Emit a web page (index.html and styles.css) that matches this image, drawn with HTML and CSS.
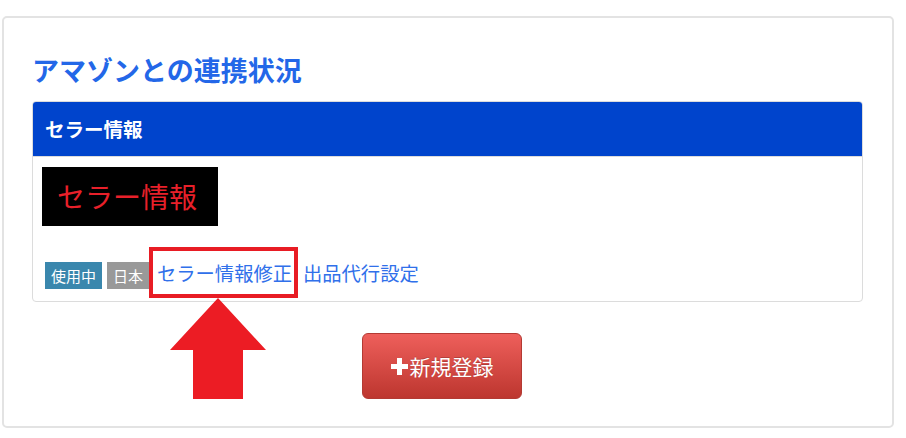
FILE: index.html
```html
<!DOCTYPE html>
<html lang="ja">
<head>
  <meta charset="UTF-8" />
  <meta name="viewport" content="width=device-width, initial-scale=1.0"/>
  <title>アマゾンとの連携状況</title>
  <link rel="stylesheet" href="styles.css">
</head>
<body>
  <div class="card">
    <h2 class="title">アマゾンとの連携状況</h2>

    <div class="panel">
      <div class="panel-head">セラー情報</div>
      <div class="panel-body">
        <div class="seller-logo">セラー情報</div>
        <div class="status-row">
          <span class="badge badge-info">使用中</span>
          <span class="badge badge-gray">日本</span>
          <span class="mark">
            <a href="#" class="link">セラー情報修正</a>
          </span>
          <a href="#" class="link link-next">出品代行設定</a>
        </div>
      </div>
    </div>

    <div class="actions">
      <button class="btn-new" type="button">
        <svg class="plus" width="17" height="17" viewBox="0 0 17 17">
          <path d="M6 0h5v6h6v5h-6v6H6v-6H0V6h6z" fill="#fff"/>
        </svg>新規登録
      </button>
    </div>

    <svg class="arrow" width="96" height="101" viewBox="0 0 96 101">
      <polygon points="48,0 96,52 73,52 73,101 23,101 23,52 0,52" fill="#ec1c24"/>
    </svg>
  </div>
</body>
</html>
```

FILE: styles.css
```css
body {
  margin: 0;
  background: #fff;
  font-family: "Noto Sans CJK JP", "Liberation Sans", sans-serif;
}
.card {
  position: relative;
  box-sizing: border-box;
  width: 892px;
  height: 412px;
  margin: 16px 0 0 2px;
  padding: 34px 29px 0 28px;
  border: 2px solid #e3e3e3;
  border-radius: 5px;
}
.title {
  margin: 0 0 13px 0;
  font-size: 27px;
  line-height: 36px;
  font-weight: bold;
  color: #2367e8;
}
.panel {
  border: 1px solid #dcdcdc;
  border-radius: 4px;
}
.panel-head {
  height: 54px;
  line-height: 54px;
  padding-left: 12px;
  background: #0044cc;
  color: #fff;
  font-size: 19.5px;
  font-weight: bold;
  border-radius: 3px 3px 0 0;
  border-bottom: 1px solid #dcdcdc;
}
.panel-body {
  padding: 10px 9px 3px 9px;
}
.seller-logo {
  width: 170px;
  height: 59px;
  line-height: 59px;
  padding-right: 6px;
  background: #000;
  color: #e8202a;
  font-size: 28px;
  text-align: center;
}
.status-row {
  display: flex;
  align-items: center;
  margin-top: 21px;
  padding-left: 3px;
}
.badge {
  height: 27px;
  line-height: 27px;
  padding: 0 6px;
  margin-top: 6px;
  color: #fff;
  font-size: 15px;
}
.badge-info {
  background: #3a87ad;
  margin-right: 5px;
}
.badge-gray {
  background: #999;
}
.mark {
  box-sizing: border-box;
  width: 149px;
  height: 51px;
  display: flex;
  align-items: center;
  padding-left: 4px;
  border: 4px solid #e81c24;
  white-space: nowrap;
  overflow: visible;
}
.link {
  color: #3070ea;
  font-size: 19.3px;
  text-decoration: none;
}
.link-next {
  margin-left: 5px;
}
.actions {
  display: flex;
  justify-content: center;
  margin-top: 31px;
  padding-right: 11px;
}
.btn-new {
  display: flex;
  align-items: center;
  justify-content: center;
  width: 160px;
  height: 66px;
  padding: 0;
  border: 1px solid #b33a33;
  border-radius: 6px;
  background: linear-gradient(#ee5f5b, #bd362f);
  color: #fff;
  font-family: "Noto Sans CJK JP", sans-serif;
  font-size: 21px;
  text-shadow: 0 -1px 0 rgba(0,0,0,0.2);
  cursor: pointer;
}
.plus {
  margin-right: 2px;
}
.arrow {
  position: absolute;
  left: 166px;
  top: 280px;
}
```
